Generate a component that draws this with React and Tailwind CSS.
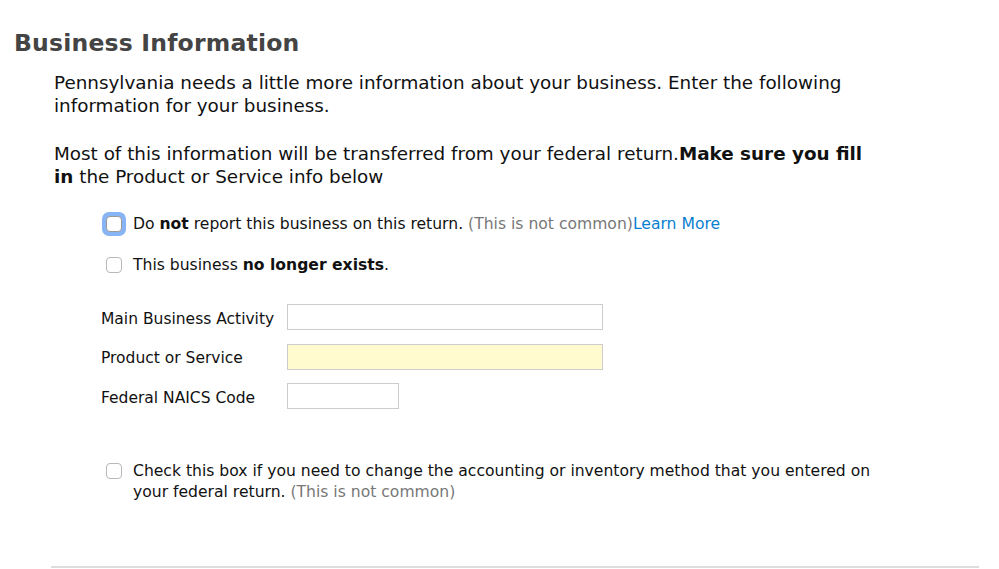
import React from "react";

function Box({ focused }) {
  if (focused) {
    return (
      <span className="inline-flex items-center justify-center w-[24px] h-[24px] rounded-[7px] bg-[#86b4f4] shrink-0">
        <span className="block w-[16px] h-[16px] rounded-[4px] bg-white border border-[#9a9a9a]" />
      </span>
    );
  }
  return (
    <span className="inline-flex items-center justify-center w-[24px] h-[24px] shrink-0">
      <span className="block w-[16px] h-[16px] rounded-[4px] bg-white border border-[#b8b8b8]" />
    </span>
  );
}

export default function App() {
  return (
    <div className="w-[999px] h-[569px] bg-white overflow-hidden relative text-[#111]" style={{ fontFamily: '"DejaVu Sans", Verdana, sans-serif' }}>
      <div className="pt-[27px] pl-[14px]">
        <h1 className="text-[23.5px] font-bold text-[#444] leading-[32px] tracking-[0.2px]">Business Information</h1>
      </div>
      <div className="pl-[54px] pt-[12px] text-[18.35px] leading-[23px]">
        <p className="w-[815px]">Pennsylvania needs a little more information about your business. Enter the following information for your business.</p>
        <p className="mt-[25px] w-[815px]">Most of this information will be transferred from your federal return.<b>Make sure you fill in</b> the Product or Service info below</p>
      </div>
      <div className="pl-[102px] pt-[24px] text-[15.6px] leading-[20px]">
        <div className="flex items-center gap-[7px] h-[24px]">
          <Box focused />
          <span>Do <b>not</b> report this business on this return. <span className="text-[#777]">(This is not common)</span><span className="text-[#0a80d0]">Learn More</span></span>
        </div>
        <div className="flex items-center gap-[7px] h-[24px] mt-[17px]">
          <Box />
          <span>This business <b>no longer exists</b>.</span>
        </div>
      </div>
      <div className="pl-[101px] pt-[27px] text-[15.5px] leading-[20px] flex flex-col gap-[13.5px]">
        <div className="flex items-center">
          <span className="w-[186px] pt-[3px]">Main Business Activity</span>
          <span className="block w-[316px] h-[26px] border border-[#ccc] bg-white" />
        </div>
        <div className="flex items-center">
          <span className="w-[186px] pt-[3px]">Product or Service</span>
          <span className="block w-[316px] h-[26px] border border-[#ccc] bg-[#fffbcf]" />
        </div>
        <div className="flex items-center">
          <span className="w-[186px] pt-[3px]">Federal NAICS Code</span>
          <span className="block w-[112px] h-[26px] border border-[#ccc] bg-white" />
        </div>
      </div>
      <div className="pl-[102px] pt-[52px] text-[15.6px] leading-[21px] flex gap-[7px]">
        <span className="-mt-[2px]"><Box /></span>
        <span className="w-[750px]">Check this box if you need to change the accounting or inventory method that you entered on your federal return. <span className="text-[#777]">(This is not common)</span></span>
      </div>
      <div className="absolute left-[51px] top-[566px] w-[928px] h-[2px] bg-[#ddd]" />
    </div>
  );
}
